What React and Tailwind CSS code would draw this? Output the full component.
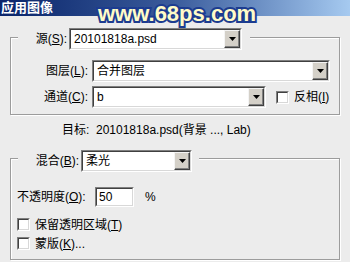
import React from "react";

const Arrow = () => (
  <svg width="7" height="4" viewBox="0 0 7 4">
    <path d="M0 0H7L3.5 4Z" fill="#000" />
  </svg>
);

const Sunken = ({ className, children }) => (
  <div className={"flex border border-t-[#7f7f7f] border-l-[#7f7f7f] border-b-white border-r-white " + className}>
    <div className="flex flex-1 border border-t-[#404040] border-l-[#404040] border-b-[#d8d8d8] border-r-[#d8d8d8] bg-white">
      {children}
    </div>
  </div>
);

const Select = ({ className, children }) => (
  <Sunken className={"h-[22px] " + className}>
    <div className="flex flex-1 items-center pl-[3px] text-[12px] text-black">{children}</div>
    <div className="flex w-[16px] items-center justify-center border border-t-[#f4f4f4] border-l-[#f4f4f4] border-b-[#404040] border-r-[#404040] bg-[#d4d0c8] shadow-[inset_-1px_-1px_0_#808080]">
      <Arrow />
    </div>
  </Sunken>
);

const Check = () => <Sunken className="h-[13px] w-[13px]" />;

const U = ({ children }) => <span className="underline underline-offset-[1px]">{children}</span>;

export default function App() {
  return (
    <div className="relative flex h-[262px] w-[350px] flex-col overflow-hidden bg-[#ececec] font-['Liberation_Sans','Noto_Sans_CJK_SC',sans-serif] text-[12px] leading-[14px] text-black">
      <div className="flex h-[16px] items-center bg-gradient-to-r from-[#0a246a] via-[#3b5c9c] to-[#a6caf0] pl-[1px] text-[13px] font-bold leading-[16px] text-white">
        应用图像
      </div>

      <div className="absolute left-[98px] top-[1px] font-['Liberation_Sans',sans-serif] text-[22px] font-bold leading-[26px] text-[#fffbc8] [paint-order:stroke_fill] [-webkit-text-stroke:4px_#1c3c90]">
        www.68ps.com
      </div>

      {/* Group 1 */}
      <div className="mx-[10px] mt-[21px] flex h-[78px] flex-col border border-[#9c9c9c] shadow-[inset_1px_1px_0_#fff,1px_1px_0_#fff]">
        <div className="-mt-[10px] ml-[7px] flex w-[232px] items-center bg-[#ececec]">
          <div className="w-[51px] pr-[2px] text-right">
            源(<U>S</U>):
          </div>
          <Select className="w-[173px]">20101818a.psd</Select>
        </div>
        <div className="mt-[10px] flex items-center">
          <div className="w-[81px] pr-[4px] text-right">
            图层(<U>L</U>):
          </div>
          <Select className="w-[238px]">合并图层</Select>
        </div>
        <div className="mt-[4px] flex items-center">
          <div className="w-[81px] pr-[4px] text-right">
            通道(<U>C</U>):
          </div>
          <Select className="w-[174px]">b</Select>
          <div className="ml-[10px]">
            <Check />
          </div>
          <div className="ml-[5px]">
            反相(<U>I</U>)
          </div>
        </div>
      </div>

      <div className="ml-[62px] mt-[8px]">目标:&nbsp; 20101818a.psd(背景 ..., Lab)</div>

      {/* Group 2 */}
      <div className="mx-[10px] mt-[21px] flex h-[102px] flex-col border border-[#9c9c9c] shadow-[inset_1px_1px_0_#fff,1px_1px_0_#fff]">
        <div className="-mt-[9px] ml-[7px] flex w-[181px] items-center bg-[#ececec]">
          <div className="w-[63px] pr-[2px] text-right">
            混合(<U>B</U>):
          </div>
          <Select className="w-[111px]">柔光</Select>
        </div>
        <div className="ml-[6px] mt-[15px] flex items-center">
          <div className="w-[78px]">
            不透明度(<U>O</U>):
          </div>
          <Sunken className="h-[20px] w-[39px]">
            <div className="flex items-center pl-[2px]">50</div>
          </Sunken>
          <div className="ml-[11px]">%</div>
        </div>
        <div className="ml-[6px] mt-[11px] flex h-[13px] items-center">
          <Check />
          <div className="ml-[5px]">
            保留透明区域(<U>T</U>)
          </div>
        </div>
        <div className="ml-[6px] mt-[6px] flex h-[13px] items-center">
          <Check />
          <div className="ml-[5px]">
            蒙版(<U>K</U>)...
          </div>
        </div>
      </div>
    </div>
  );
}
